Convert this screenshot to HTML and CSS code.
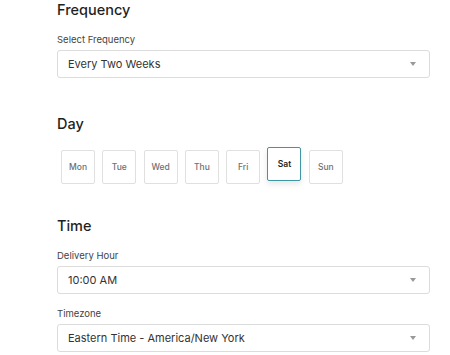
FILE: index.html
```html
<!DOCTYPE html>
<html lang="en">
<head>
  <meta charset="UTF-8">
  <meta name="viewport" content="width=device-width, initial-scale=1.0">
  <title>Delivery Schedule</title>
  <link rel="stylesheet" href="styles.css">
</head>
<body>

<div class="schedule">
  <!-- Frequency -->
  <h2 class="title">Frequency</h2>
  <div class="field first">
    <label class="label">Select Frequency</label>
    <div class="select">
      <span>Every Two Weeks</span>
      <span class="arrow"></span>
    </div>
  </div>

  <!-- Day -->
  <h2 class="title day-title">Day</h2>
  <div class="days">
    <button class="day">Mon</button>
    <button class="day">Tue</button>
    <button class="day">Wed</button>
    <button class="day">Thu</button>
    <button class="day">Fri</button>
    <button class="day active">Sat</button>
    <button class="day">Sun</button>
  </div>

  <!-- Time -->
  <h2 class="title time-title">Time</h2>
  <div class="field first">
    <label class="label">Delivery Hour</label>
    <div class="select">
      <span>10:00 AM</span>
      <span class="arrow"></span>
    </div>
  </div>
  <div class="field">
    <label class="label">Timezone</label>
    <div class="select">
      <span>Eastern Time - America/New York</span>
      <span class="arrow"></span>
    </div>
  </div>
</div>

</body>
</html>
```

FILE: styles.css
```css
* {
  box-sizing: border-box;
}
body {
  margin: 0;
  background-color: #fff;
  font-family: Inter, "Noto Sans", sans-serif;
  color: #222;
}
.schedule {
  width: 430px;
  padding-left: 57px;
}
.title {
  margin: 0;
  font-size: 14.5px;
  line-height: 20px;
  font-weight: 500;
  color: #1f1f1f;
}
.day-title {
  margin-top: 36px;
}
.time-title {
  margin-top: 32px;
}
.field {
  margin-top: 14px;
}
.field.first {
  margin-top: 14px;
}
.label {
  display: block;
  font-size: 9.5px;
  line-height: 12px;
  color: #444;
  margin-bottom: 4px;
}
.select {
  display: flex;
  align-items: center;
  justify-content: space-between;
  height: 28px;
  padding: 0 10px 0 10px;
  border: 1px solid #dcdcdc;
  border-radius: 3px;
  font-size: 11px;
  color: #333;
}
.arrow {
  width: 0;
  height: 0;
  margin-right: 3px;
  border-left: 3.5px solid transparent;
  border-right: 3.5px solid transparent;
  border-top: 4px solid #999;
}
.days {
  display: flex;
  gap: 7.3px;
  margin-top: 16px;
  padding-left: 4px;
}
.day {
  width: 34px;
  height: 34px;
  padding: 0;
  border: 1px solid #e0e0e0;
  border-radius: 2px;
  background-color: #fff;
  font-family: inherit;
  font-size: 8.5px;
  font-weight: 500;
  color: #707070;
}
.day.active {
  border: 1.5px solid #3f97a6;
  color: #222;
  font-weight: 600;
  transform: translateY(-3px);
  box-shadow: 0 3px 6px rgba(0, 0, 0, 0.1);
}
```
